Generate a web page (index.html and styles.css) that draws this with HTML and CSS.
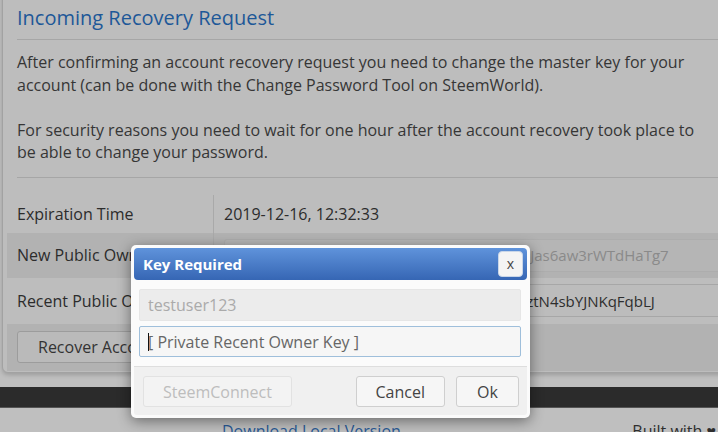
FILE: index.html
```html
<!DOCTYPE html>
<html>
<head>
<meta charset="utf-8">
<link rel="stylesheet" href="styles.css">
</head>
<body>
<div class="page">
  <section class="panel">
    <h2 class="title">Incoming Recovery Request</h2>
    <hr class="rule">
    <div class="desc">After confirming an account recovery request you need to change the master key for your account (can be done with the Change Password Tool on SteemWorld).<br><br>For security reasons you need to wait for one hour after the account recovery took place to be able to change your password.</div>
    <hr class="rule rule-bottom">
    <table class="info">
      <tr class="row-plain">
        <td class="label">Expiration Time</td>
        <td class="value">2019-12-16, 12:32:33</td>
      </tr>
      <tr class="row-striped">
        <td class="label">New Public Owner Key</td>
        <td class="value"><input class="key key-readonly" readonly value="STM7Ab3Qz9WmK2pLx5VhC8nRf4Tg1YedJJas6aw3rWTdHaTg7"></td>
      </tr>
      <tr class="row-plain">
        <td class="label">Recent Public Owner Key</td>
        <td class="value"><input class="key" value="STM5Hq8Ld3Pw6Ne2Xc9Bv4Mr7Kj8aTsUrztN4sbYJNKqFqbLJ"></td>
      </tr>
      <tr class="row-striped row-action">
        <td class="action" colspan="2"><button class="btn-recover">Recover Account</button></td>
      </tr>
    </table>
  </section>
  <div class="darkbar"></div>
  <footer class="foot">
    <a class="foot-link">Download Local Version</a>
    <span class="foot-built">Built with ♥</span>
  </footer>
</div>

<div class="dialog">
  <div class="dialog-head">
    <span class="dialog-title">Key Required</span>
    <button class="dialog-close">x</button>
  </div>
  <div class="dialog-body">
    <input class="field field-disabled" disabled value="testuser123">
    <div class="caret-wrap">
      <input class="field field-active" placeholder="[ Private Recent Owner Key ]">
    </div>
  </div>
  <div class="dialog-foot">
    <button class="dbtn dbtn-disabled">SteemConnect</button>
    <span class="spacer"></span>
    <button class="dbtn">Cancel</button>
    <button class="dbtn dbtn-ok">Ok</button>
  </div>
</div>
</body>
</html>
```
FILE: styles.css
```css
html, body {
  margin: 0;
  padding: 0;
}
body {
  width: 718px;
  height: 432px;
  overflow: hidden;
  background: #bfbfbf;
  font-family: "Open Sans", "Liberation Sans", sans-serif;
  position: relative;
}
.page {
  width: 718px;
}
.panel {
  margin: -14px 0 0 2px;
  width: 760px;
  box-sizing: border-box;
  border: 1px solid #a2a2a2;
  border-radius: 6px;
  background: #bdbdbd;
  padding: 14px 0 1px 0;
  box-shadow: 0 2px 4px rgba(0,0,0,0.18);
}
.title {
  margin: 3px 0 0 14px;
  font-size: 20px;
  line-height: 27px;
  font-weight: normal;
  color: #1d5898;
}
.rule {
  margin: 8px 0 0 14px;
  border: 0;
  border-top: 1px solid #a6a6a6;
  height: 0;
}
.rule-bottom {
  margin-top: 13px;
}
.desc {
  margin: 11px 0 0 14px;
  width: 700px;
  font-size: 16px;
  line-height: 22.5px;
  color: #363636;
}
.info {
  margin: 17px 0 0 4px;
  border-collapse: collapse;
  width: 753px;
  font-size: 16px;
  color: #2c2c2c;
}
.info td {
  padding: 0;
  vertical-align: middle;
}
.row-plain td {
  background: #bdbdbd;
}
.row-striped td {
  background: #b2b2b2;
}
.info tr:first-child td {
  height: 38px;
}
.info tr:nth-child(2) td {
  height: 45px;
}
.info tr:nth-child(3) td {
  height: 46px;
}
.label {
  width: 196px;
  padding-left: 10px !important;
  border-right: 1px solid #a9a9a9;
  white-space: nowrap;
}
.value {
  padding-left: 10px !important;
  padding-right: 8px !important;
}
.key {
  box-sizing: border-box;
  width: 100%;
  height: 33px;
  padding: 0 10px;
  font-family: "Open Sans", "Liberation Sans", sans-serif;
  font-size: 15px;
  border: 1px solid #a7a7a7;
  border-radius: 3px;
  background: #bcbcbc;
  color: #2e2e2e;
  outline: none;
}
.key-readonly {
  background: #b5b5b5;
  border-color: #adadad;
  color: #8a8a8a;
}
.action {
  height: 47px;
  padding-left: 10px !important;
}
.btn-recover {
  height: 32px;
  padding: 0 20px;
  font-family: "Open Sans", "Liberation Sans", sans-serif;
  font-size: 16px;
  color: #333;
  background: #bababa;
  border: 1px solid #9c9c9c;
  border-radius: 3px;
}
.darkbar {
  margin-top: 14px;
  height: 20px;
  background: #2b2b2b;
  border-bottom: 1px solid #555;
}
.foot {
  display: flex;
  padding: 12px 2px 0 222px;
  font-size: 16px;
  line-height: 22px;
}
.foot-link {
  color: #2a5a96;
  text-decoration: underline;
}
.foot-built {
  margin-left: auto;
  color: #2e2e2e;
}

/* dialog */
.dialog {
  position: absolute;
  left: 131px;
  top: 245px;
  width: 399px;
  height: 173px;
  box-sizing: border-box;
  padding: 3px;
  background: #fbfbfb;
  border-radius: 5px;
  box-shadow: 0 3px 14px rgba(0,0,0,0.45);
  display: flex;
  flex-direction: column;
}
.dialog-head {
  height: 32px;
  border-radius: 4px;
  background: linear-gradient(#5f93db, #3666b4);
  display: flex;
  align-items: center;
  justify-content: space-between;
  padding: 0 4px 0 9px;
}
.dialog-title {
  color: #fff;
  font-weight: bold;
  font-size: 15px;
}
.dialog-close {
  width: 25px;
  height: 26px;
  padding: 0;
  border: 1px solid #c9d6e8;
  border-radius: 4px;
  background: #f4f4f4;
  color: #444;
  font-family: "Open Sans", "Liberation Sans", sans-serif;
  font-size: 14px;
  line-height: 22px;
}
.dialog-body {
  padding: 9px 6px 9px 5px;
  display: flex;
  flex-direction: column;
  gap: 5px;
}
.field {
  box-sizing: border-box;
  width: 100%;
  height: 32px;
  padding: 0 8px;
  font-family: "Open Sans", "Liberation Sans", sans-serif;
  font-size: 16px;
  border-radius: 2px;
  outline: none;
  display: block;
}
.field-disabled {
  background: #ececec;
  border: 1px solid #e6e6e6;
  color: #aaa;
}
.field-active {
  height: 31px;
  background: #f6f6f6;
  border: 1px solid #9fbfdb;
}
.field-active::placeholder {
  color: #666;
}
.caret-wrap {
  position: relative;
}
.caret-wrap::before {
  content: "";
  position: absolute;
  left: 9px;
  top: 7px;
  width: 1px;
  height: 18px;
  background: #111;
}
.dialog-foot {
  flex: 1;
  display: flex;
  align-items: flex-start;
  gap: 11px;
  padding: 9px 8px 0 9px;
  background: #f0f0f0;
  border-top: 1px solid #dedede;
  border-radius: 0 0 3px 3px;
}
.spacer {
  flex: 1;
}
.dbtn {
  height: 31px;
  padding: 0 19px;
  font-family: "Open Sans", "Liberation Sans", sans-serif;
  font-size: 16px;
  color: #444;
  background: #f6f6f6;
  border: 1px solid #cfcfcf;
  border-radius: 3px;
}
.dbtn-disabled {
  width: 149px;
  color: #bdbdbd;
  border-color: #e2e2e2;
  background: #f3f3f3;
}
.dbtn-ok {
  width: 63px;
  padding: 0;
}
```
